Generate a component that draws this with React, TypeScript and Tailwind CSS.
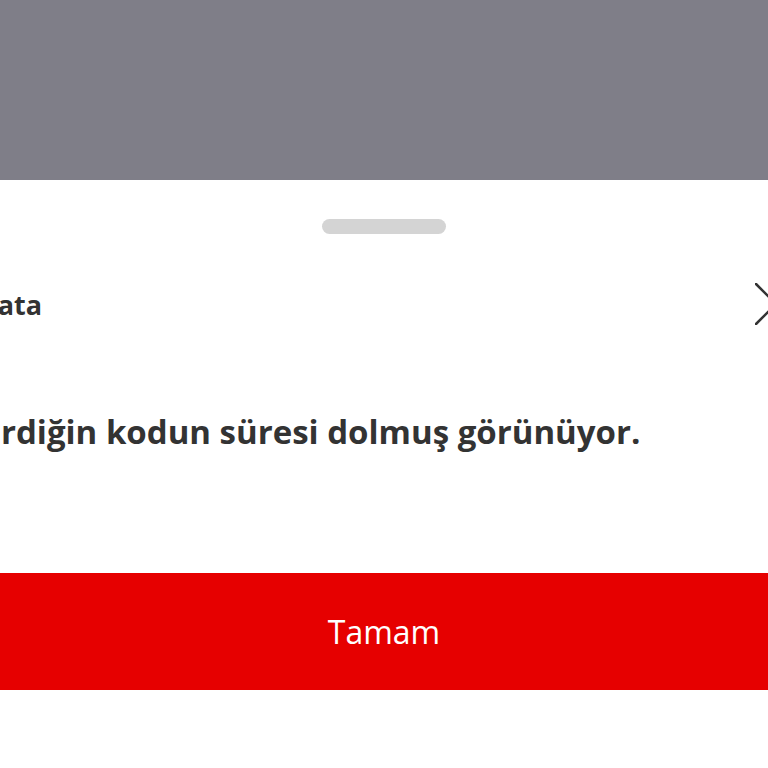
export default function App() {
  return (
    <div className="w-[768px] h-[768px] overflow-hidden bg-white flex flex-col font-['Open_Sans',sans-serif] text-[#333333]">
      {/* dimmed page behind the sheet */}
      <div className="h-[180px] shrink-0 bg-[#7f7e88]" />

      {/* bottom sheet */}
      <div className="flex-1 flex flex-col bg-white">
        <div className="mt-[39px] mx-auto w-[124px] h-[15px] rounded-full bg-[#d4d4d4]" />

        <div className="mt-[49px] h-[42px] flex items-center justify-between ml-[-23px] mr-[-29px]">
          <h2 className="text-[27px] font-bold leading-none">Hata</h2>
          <button className="w-[42px] h-[42px] flex items-center justify-center">
            <svg width="42" height="42" viewBox="0 0 42 42" fill="none" stroke="#333333" strokeWidth="2.5" strokeLinecap="round">
              <path d="M1 1L41 41" />
              <path d="M41 1L1 41" />
            </svg>
          </button>
        </div>

        <p className="mt-[87px] ml-[-33px] whitespace-nowrap text-[33px] font-bold leading-[40px]">
          Girdiğin kodun süresi dolmuş görünüyor.
        </p>

        <button className="mt-[121px] w-full h-[117px] bg-[#e60000] text-white text-[32px] leading-none">
          Tamam
        </button>
      </div>
    </div>
  );
}
